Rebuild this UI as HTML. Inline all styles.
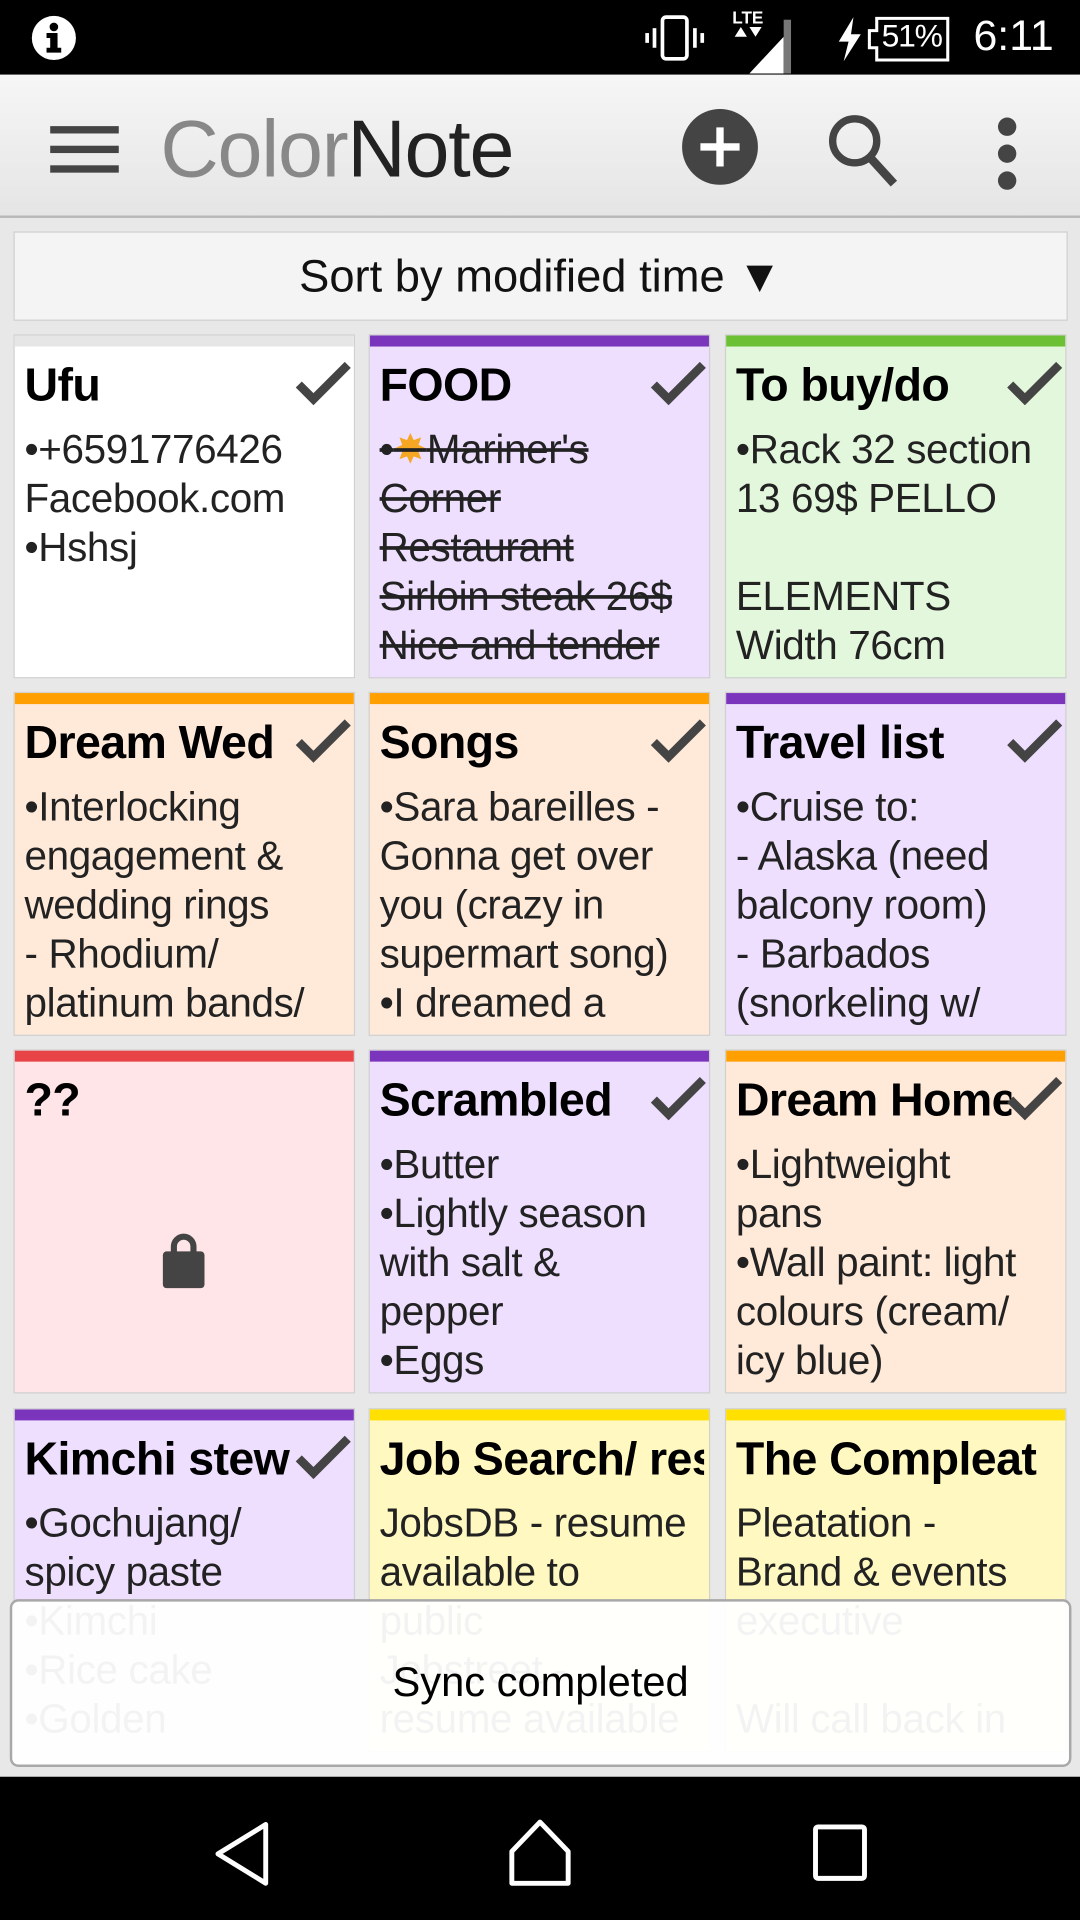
<!DOCTYPE html>
<html><head><meta charset="utf-8">
<style>
*{margin:0;padding:0;box-sizing:border-box}
html,body{width:1080px;height:1920px;overflow:hidden;background:#e8e8e8}
#w{position:absolute;left:0;top:0;width:882px;height:1568px;transform:scale(1.22449);transform-origin:0 0;font-family:"Liberation Sans",sans-serif;background:#e8e8e8}
.sb{position:absolute;left:0;top:0;width:882px;height:61px;background:#000;color:#fff}
.tb{position:absolute;left:0;top:61px;width:882px;height:117px;background:linear-gradient(#f6f6f6,#e5e5e5);border-bottom:2px solid #b8b8b8}
.sort{position:absolute;left:11px;top:189px;width:861px;height:73px;background:#f4f4f4;border:1px solid #cfcfcf;text-align:center;font-size:37px;line-height:71px;color:#111}
.c{position:absolute;width:279px;height:281px;border:1px solid #d0d0d0;overflow:hidden}
.c .bar{height:9px}
.c .t{position:absolute;left:8px;top:18px;font-size:38px;font-weight:bold;color:#000;white-space:nowrap;width:225px;overflow:hidden;line-height:46px;letter-spacing:-0.5px}
.c .t.full{width:265px}
.c svg.ck{position:absolute;left:229px;top:21px}
.c .b{position:absolute;left:8px;top:73px;font-size:33px;line-height:40px;color:#222;white-space:nowrap;letter-spacing:-0.3px}
.s{text-decoration:line-through}
.toast{position:absolute;left:8px;top:1306px;width:867px;height:137px;background:rgba(255,255,255,0.95);border:2px solid #a8a8a8;border-radius:7px;text-align:center;font-size:34px;line-height:133px;color:#000}
.nav{position:absolute;left:0;top:1451px;width:882px;height:117px;background:#000}
</style></head><body><div id="w">
<div class="sb">
<svg width="40" height="40" style="position:absolute;left:24px;top:11px" viewBox="0 0 40 40"><circle cx="20" cy="20" r="18" fill="#fff"/><circle cx="20" cy="11" r="3.5" fill="#000"/><path d="M14 16h9v12h3v4H14v-4h3v-8h-3z" fill="#000"/></svg>
<svg width="50" height="40" style="position:absolute;left:526px;top:11px" viewBox="0 0 50 40"><rect x="15" y="3" width="20" height="34" rx="3" fill="none" stroke="#fff" stroke-width="3"/><rect x="7" y="12" width="3" height="16" fill="#fff"/><rect x="1" y="16" width="3" height="8" fill="#fff"/><rect x="40" y="12" width="3" height="16" fill="#fff"/><rect x="46" y="16" width="3" height="8" fill="#fff"/></svg>
<div style="position:absolute;left:598px;top:6px;font-size:14px;font-weight:bold;color:#fff">LTE</div>
<svg width="52" height="44" style="position:absolute;left:596px;top:16px" viewBox="0 0 52 44"><path d="M4 14l5-8 5 8z M16 6h10l-5 8z" fill="#fff"/><path d="M16 44L44 14V44z" fill="#fff"/><path d="M44 0h6v44h-6z" fill="#777"/></svg>
<svg width="22" height="36" style="position:absolute;left:683px;top:14px" viewBox="0 0 22 36"><path d="M14 0L2 20h8L6 36 20 14h-8z" fill="#fff"/></svg>
<svg width="70" height="38" style="position:absolute;left:706px;top:13px" viewBox="0 0 70 38"><path d="M10 2h58v34H10V26H4V12h6z" fill="none" stroke="#fff" stroke-width="2.5"/></svg>
<div style="position:absolute;left:720px;top:14px;font-size:26px;color:#fff;letter-spacing:-1px">51%</div>
<div style="position:absolute;left:795px;top:10px;font-size:35px;color:#fff">6:11</div>
</div>
<div class="tb">
<div style="position:absolute;left:41px;top:42px;width:56px;height:6px;background:#444"></div>
<div style="position:absolute;left:41px;top:58px;width:56px;height:6px;background:#444"></div>
<div style="position:absolute;left:41px;top:74px;width:56px;height:6px;background:#444"></div>
<div style="position:absolute;left:131px;top:24px;font-size:66px;letter-spacing:-1px;color:#888;line-height:72px">Color<span style="color:#222">Note</span></div>
<svg width="62" height="62" style="position:absolute;left:557px;top:28px" viewBox="0 0 62 62"><circle cx="31" cy="31" r="31" fill="#444"/><path d="M28 15h6v13h13v6H34v13h-6V34H15v-6h13z" fill="#fff"/></svg>
<svg width="62" height="62" style="position:absolute;left:674px;top:30px" viewBox="0 0 62 62"><circle cx="24" cy="24" r="18" fill="none" stroke="#444" stroke-width="6"/><path d="M36 37l20 22" stroke="#444" stroke-width="7"/></svg>
<div style="position:absolute;left:815px;top:35px;width:15px;height:15px;border-radius:50%;background:#444"></div>
<div style="position:absolute;left:815px;top:57px;width:15px;height:15px;border-radius:50%;background:#444"></div>
<div style="position:absolute;left:815px;top:79px;width:15px;height:15px;border-radius:50%;background:#444"></div>
</div>
<div class="sort">Sort by modified time ▼</div>

<div class="c" style="left:11px;top:273px;background:#fff"><div class="bar" style="background:#e6e6e6"></div><div class="t">Ufu</div><svg class="ck" width="46" height="36" viewBox="0 0 46 36"><path d="M3 19l12 12L43 3" fill="none" stroke="#444" stroke-width="7"/></svg><div class="b">•+6591776426<br>Facebook.com<br>•Hshsj</div></div>
<div class="c" style="left:301px;top:273px;background:#eedfff"><div class="bar" style="background:#7b35bd"></div><div class="t">FOOD</div><svg class="ck" width="46" height="36" viewBox="0 0 46 36"><path d="M3 19l12 12L43 3" fill="none" stroke="#444" stroke-width="7"/></svg><div class="b"><span class="s">•<span style="color:#f5a623">✸</span>Mariner's<br>Corner<br>Restaurant<br>Sirloin steak 26$<br>Nice and tender</span></div></div>
<div class="c" style="left:592px;top:273px;background:#e3f7dc"><div class="bar" style="background:#6cc033"></div><div class="t">To buy/do</div><svg class="ck" width="46" height="36" viewBox="0 0 46 36"><path d="M3 19l12 12L43 3" fill="none" stroke="#444" stroke-width="7"/></svg><div class="b">•Rack 32 section<br>13 69$ PELLO<br>&nbsp;<br>ELEMENTS<br>Width 76cm</div></div>

<div class="c" style="left:11px;top:565px;background:#ffe9d8"><div class="bar" style="background:#ffa000"></div><div class="t">Dream Wed</div><svg class="ck" width="46" height="36" viewBox="0 0 46 36"><path d="M3 19l12 12L43 3" fill="none" stroke="#444" stroke-width="7"/></svg><div class="b">•Interlocking<br>engagement &amp;<br>wedding rings<br>- Rhodium/<br>platinum bands/</div></div>
<div class="c" style="left:301px;top:565px;background:#ffe9d8"><div class="bar" style="background:#ffa000"></div><div class="t">Songs</div><svg class="ck" width="46" height="36" viewBox="0 0 46 36"><path d="M3 19l12 12L43 3" fill="none" stroke="#444" stroke-width="7"/></svg><div class="b">•Sara bareilles -<br>Gonna get over<br>you (crazy in<br>supermart song)<br>•I dreamed a</div></div>
<div class="c" style="left:592px;top:565px;background:#eedfff"><div class="bar" style="background:#7b35bd"></div><div class="t">Travel list</div><svg class="ck" width="46" height="36" viewBox="0 0 46 36"><path d="M3 19l12 12L43 3" fill="none" stroke="#444" stroke-width="7"/></svg><div class="b">•Cruise to:<br>- Alaska (need<br>balcony room)<br>- Barbados<br>(snorkeling w/</div></div>

<div class="c" style="left:11px;top:857px;background:#ffe5e7"><div class="bar" style="background:#e84448"></div><div class="t">??</div><svg width="40" height="60" style="position:absolute;left:118px;top:142px" viewBox="0 0 40 60"><path d="M12 24V18a8 8 0 0 1 16 0v6" fill="none" stroke="#444" stroke-width="5"/><rect x="3" y="22" width="34" height="30" rx="3" fill="#444"/></svg></div>
<div class="c" style="left:301px;top:857px;background:#eedfff"><div class="bar" style="background:#7b35bd"></div><div class="t">Scrambled</div><svg class="ck" width="46" height="36" viewBox="0 0 46 36"><path d="M3 19l12 12L43 3" fill="none" stroke="#444" stroke-width="7"/></svg><div class="b">•Butter<br>•Lightly season<br>with salt &amp;<br>pepper<br>•Eggs</div></div>
<div class="c" style="left:592px;top:857px;background:#ffe9d8"><div class="bar" style="background:#ffa000"></div><div class="t">Dream Home</div><svg class="ck" width="46" height="36" viewBox="0 0 46 36"><path d="M3 19l12 12L43 3" fill="none" stroke="#444" stroke-width="7"/></svg><div class="b">•Lightweight<br>pans<br>•Wall paint: light<br>colours (cream/<br>icy blue)</div></div>

<div class="c" style="left:11px;top:1150px;background:#eedfff"><div class="bar" style="background:#7b35bd"></div><div class="t">Kimchi stew</div><svg class="ck" width="46" height="36" viewBox="0 0 46 36"><path d="M3 19l12 12L43 3" fill="none" stroke="#444" stroke-width="7"/></svg><div class="b">•Gochujang/<br>spicy paste<br>•Kimchi<br>•Rice cake<br>•Golden</div></div>
<div class="c" style="left:301px;top:1150px;background:#fff8c0"><div class="bar" style="background:#ffe000"></div><div class="t full">Job Search/ resume</div><div class="b">JobsDB - resume<br>available to<br>public<br>Jobstreet -<br>resume available</div></div>
<div class="c" style="left:592px;top:1150px;background:#fff8c0"><div class="bar" style="background:#ffe000"></div><div class="t full">The Compleat</div><div class="b">Pleatation -<br>Brand &amp; events<br>executive<br>&nbsp;<br>Will call back in</div></div>

<div class="toast">Sync completed</div>
<div class="nav">
<svg width="50" height="54" style="position:absolute;left:173px;top:36px" viewBox="0 0 50 54"><path d="M44 3L5 27l39 24z" fill="none" stroke="#fff" stroke-width="4" stroke-linejoin="round"/></svg>
<svg width="54" height="56" style="position:absolute;left:414px;top:34px" viewBox="0 0 54 56"><path d="M27 3L4 27v26h46V27z" fill="none" stroke="#fff" stroke-width="4" stroke-linejoin="round"/></svg>
<svg width="46" height="48" style="position:absolute;left:663px;top:38px" viewBox="0 0 46 48"><rect x="3" y="3" width="40" height="42" rx="2" fill="none" stroke="#fff" stroke-width="4"/></svg>
</div>
</div></body></html>
